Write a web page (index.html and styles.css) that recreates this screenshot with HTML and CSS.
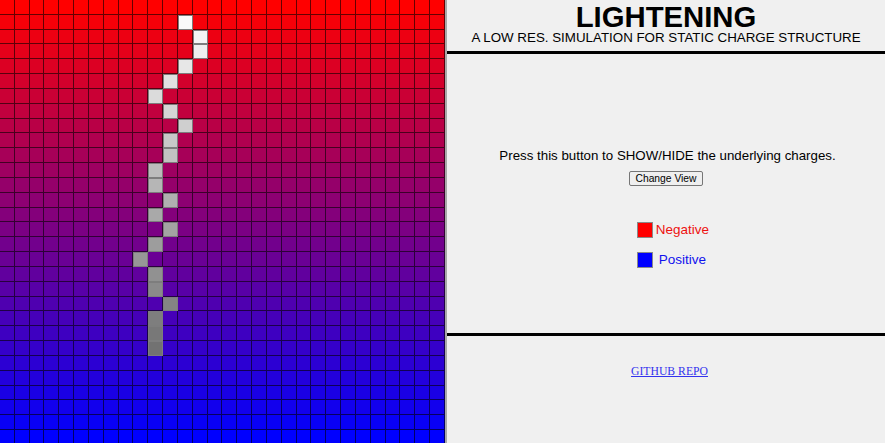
FILE: index.html
```html
<!DOCTYPE html>
<html>
<head>
<meta charset="utf-8">
<title>Lightening</title>
<link rel="stylesheet" href="styles.css">
</head>
<body>
<main class="app">
  <div class="board" id="board"></div>
  <section class="panel">
    <header class="head">
      <h1 class="title">LIGHTENING</h1>
      <p class="subtitle">A LOW RES. SIMULATION FOR STATIC CHARGE STRUCTURE</p>
    </header>
    <div class="controls">
      <p class="hint">Press this button to SHOW/HIDE the underlying charges.</p>
      <button class="toggle" type="button">Change View</button>
      <div class="legend">
        <div class="legend-row neg"><span class="swatch swatch-neg"></span>Negative</div>
        <div class="legend-row pos"><span class="swatch swatch-pos"></span>Positive</div>
      </div>
    </div>
    <footer class="foot">
      <a class="repo" href="#">GITHUB REPO</a>
    </footer>
  </section>
</main>
<script src="script.js"></script>
</body>
</html>
```
FILE: styles.css
```css
* { box-sizing: border-box; }
html, body { margin: 0; padding: 0; }
body {
  background: #f0f0f0;
  font-family: "Liberation Sans", Arial, sans-serif;
  overflow: hidden;
}
.app {
  display: flex;
  height: 443px;
}
.board {
  flex: 0 0 445px;
  width: 445px;
  height: 445px;
  display: grid;
  grid-template-columns: repeat(30, 1fr);
  grid-template-rows: repeat(30, 1fr);
}
.cell {
  border-right: 1px solid rgba(0, 0, 0, 0.6);
  border-bottom: 1px solid rgba(0, 0, 0, 0.6);
}
.cell.charge {
  border: 1px solid #7d7d7d;
}
.panel {
  flex: 1;
  display: flex;
  flex-direction: column;
  border-left: 2px solid #a8a8a8;
  background: #f0f0f0;
}
.head {
  height: 54px;
  border-bottom: 3px solid #000;
  text-align: center;
}
.title {
  margin: 0;
  font-size: 29.3px;
  line-height: 33px;
  font-weight: bold;
  color: #000;
}
.subtitle {
  margin: -3px 0 0;
  font-size: 13.35px;
  line-height: 16px;
  color: #000;
}
.controls {
  height: 282px;
  border-bottom: 3px solid #000;
  display: flex;
  flex-direction: column;
  align-items: center;
  padding-top: 94px;
}
.hint {
  margin: 0;
  padding-left: 3px;
  font-size: 13.3px;
  line-height: 16px;
  color: #000;
}
.toggle {
  margin-top: 7px;
  font-family: "Liberation Sans", Arial, sans-serif;
  font-size: 10.3px;
  padding: 1px 5px;
  background: #efefef;
  border: 1px solid #767676;
  border-radius: 2px;
  color: #000;
}
.legend {
  margin-top: 36px;
  margin-left: 14px;
  display: flex;
  flex-direction: column;
  gap: 14px;
}
.legend-row {
  display: flex;
  align-items: center;
  font-size: 13.5px;
  line-height: 16px;
}
.neg { color: #ee1111; }
.pos { color: #1111ee; }
.swatch {
  width: 16px;
  height: 16px;
  border: 1px solid #8a8a8a;
  margin-right: 3px;
}
.pos .swatch { margin-right: 6px; }
.swatch-neg { background: #ff0000; }
.swatch-pos { background: #0000ff; }
.foot {
  flex: 1;
  text-align: center;
  padding-top: 25px;
  padding-left: 7px;
}
.repo {
  font-family: "Liberation Serif", "Times New Roman", serif;
  font-size: 11.7px;
  color: #3333ee;
}
```
FILE: script.js
```js
(function () {
  var board = document.getElementById('board');
  var path = [
    [1,12],[2,13],[3,13],[4,12],[5,11],[6,10],[7,11],[8,12],[9,11],[10,11],
    [11,10],[12,10],[13,11],[14,10],[15,11],[16,10],[17,9],[18,10],[19,10],
    [20,11],[21,10],[22,10],[23,10]
  ];
  var lit = {};
  path.forEach(function (p) { lit[p[0] + '-' + p[1]] = true; });
  for (var r = 0; r < 30; r++) {
    var red = Math.round(255 * (1 - r / 29));
    var blue = Math.round(255 * r / 29);
    for (var c = 0; c < 30; c++) {
      var d = document.createElement('div');
      d.className = 'cell';
      if (lit[r + '-' + c]) {
        var g = Math.round(250 - (r - 1) * 6.2);
        d.className += ' charge';
        d.style.background = 'rgb(' + g + ',' + g + ',' + g + ')';
      } else {
        d.style.background = 'rgb(' + red + ',0,' + blue + ')';
      }
      board.appendChild(d);
    }
  }
})();
```
